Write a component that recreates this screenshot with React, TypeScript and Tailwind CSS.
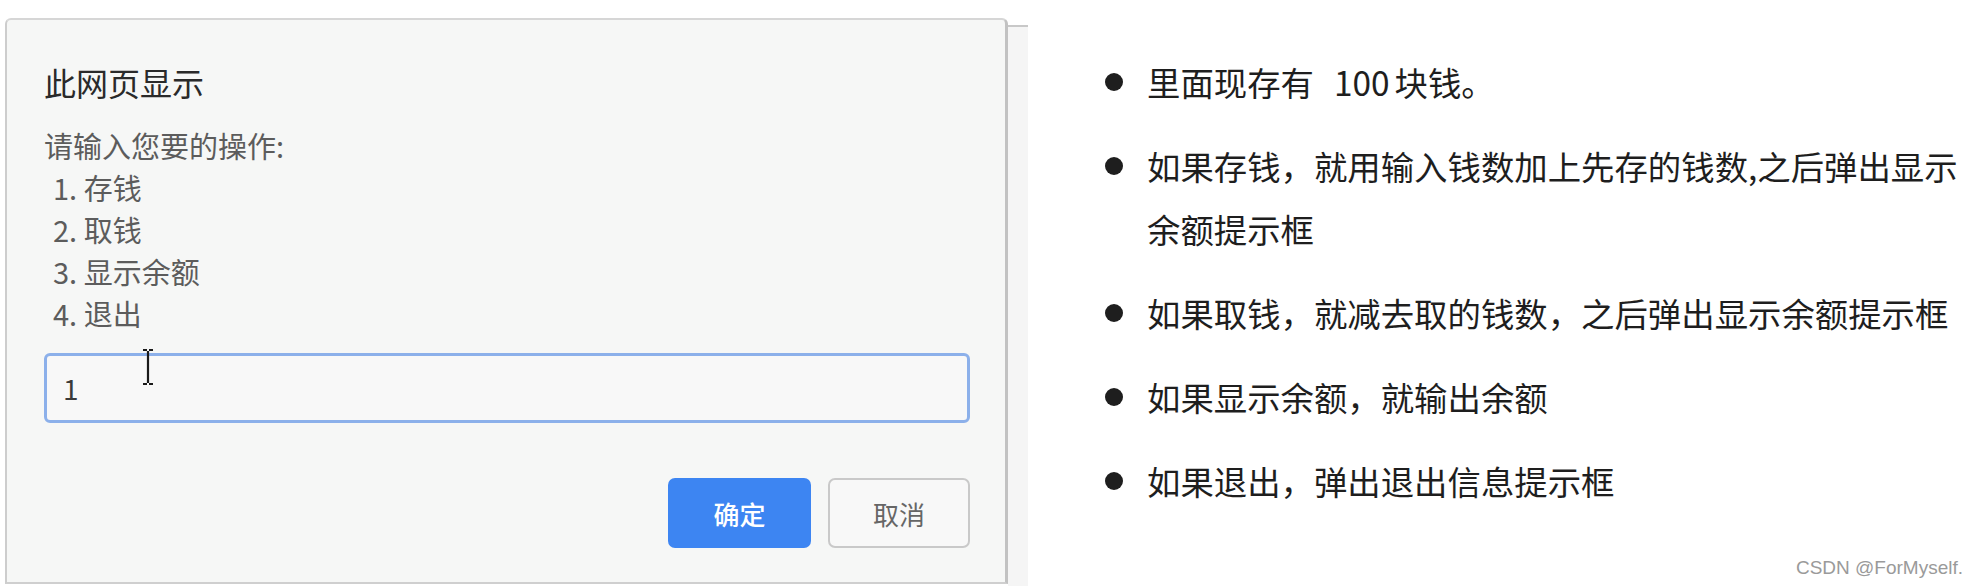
import React from "react";

const cjk = { fontFamily: '"Noto Sans CJK SC", "Noto Sans", sans-serif' };

function Bullet({ lines }: { lines: React.ReactNode[] }) {
  return (
    <div className="flex items-start">
      <div className="h-[63px] w-[18px] flex items-center">
        <div className="w-[18px] h-[18px] rounded-full bg-[#1e1e1e]" />
      </div>
      <div className="ml-[24px] text-[33.4px] leading-[63px] text-[#1e1e1e] whitespace-nowrap">
        {lines.map((l, i) => (
          <div key={i}>{l}</div>
        ))}
      </div>
    </div>
  );
}

export default function App() {
  return (
    <div
      className="relative w-[1976px] h-[586px] bg-white flex overflow-hidden"
      style={cjk}
    >
      {/* Dialog */}
      <div className="pl-[5px] pt-[18px] flex">
        <div className="relative w-[1003px] h-[566px] bg-[#f6f7f6] border-l-2 border-t-2 border-r-[3px] border-b-2 border-l-[#cdcdcd] border-t-[#d6d6d6] border-r-[#c2c2c2] border-b-[#cfcfcf] rounded-t-[6px] pl-[37px] pr-[35px] pt-[40px]">
          <div className="text-[32px] leading-[44px] h-[44px] text-[#2a2a2a]">此网页显示</div>
          <div className="mt-[20px] text-[29px] leading-[42px] text-[#5c5c5c]">
            <div>请输入您要的操作:</div>
            <div className="pl-[9px]">1. 存钱</div>
            <div className="pl-[9px]">2. 取钱</div>
            <div className="pl-[9px]">3. 显示余额</div>
            <div className="pl-[9px]">4. 退出</div>
          </div>
          <div className="mt-[19px] h-[70px] w-full rounded-[6px] border-[3px] border-[#8cb0ea] bg-[#f8f8f8] flex items-center pl-[16px] text-[28px] text-[#3a3a3a]">
            1
          </div>
          <div className="mt-[55px] flex justify-end gap-[17px]">
            <div className="w-[143px] h-[70px] rounded-[7px] bg-[#3d85f2] flex items-center justify-center text-[26px] font-medium text-white">
              确定
            </div>
            <div className="w-[142px] h-[70px] rounded-[7px] border-2 border-[#c9c9c9] bg-[#f8f8f8] flex items-center justify-center text-[26px] text-[#666666]">
              取消
            </div>
          </div>
          {/* I-beam mouse cursor */}
          <svg
            className="absolute left-[133px] top-[328px]"
            width="16"
            height="38"
            viewBox="0 0 16 38"
          >
            <path
              d="M3 2 H7 M9 2 H13 M8 3 V35 M3 36 H7 M9 36 H13"
              stroke="#1a1a1a"
              strokeWidth="2.2"
              fill="none"
            />
          </svg>
        </div>
      </div>

      {/* background strip behind dialog */}
      <div className="mt-[25px] w-[20px] bg-[#f5f5f5] border-t-2 border-[#c8c8c8]" />

      {/* Right content */}
      <div className="pl-[77px] pt-[50px] flex flex-col gap-[21px]">
        <Bullet
          lines={[
            <span>
              里面现存有<span className="ml-[20px]">100</span>
              <span className="ml-[5px]">块钱。</span>
            </span>,
          ]}
        />
        <Bullet
          lines={["如果存钱，就用输入钱数加上先存的钱数,之后弹出显示", "余额提示框"]}
        />
        <Bullet lines={["如果取钱，就减去取的钱数，之后弹出显示余额提示框"]} />
        <Bullet lines={["如果显示余额，就输出余额"]} />
        <Bullet lines={["如果退出，弹出退出信息提示框"]} />
      </div>

      {/* watermark */}
      <div
        className="absolute right-[13px] top-[556px] text-[19px] leading-[24px] text-[#9a9a9a]"
        style={{ fontFamily: '"Liberation Sans Narrow", "Liberation Sans", sans-serif' }}
      >
        CSDN @ForMyself.
      </div>
    </div>
  );
}
